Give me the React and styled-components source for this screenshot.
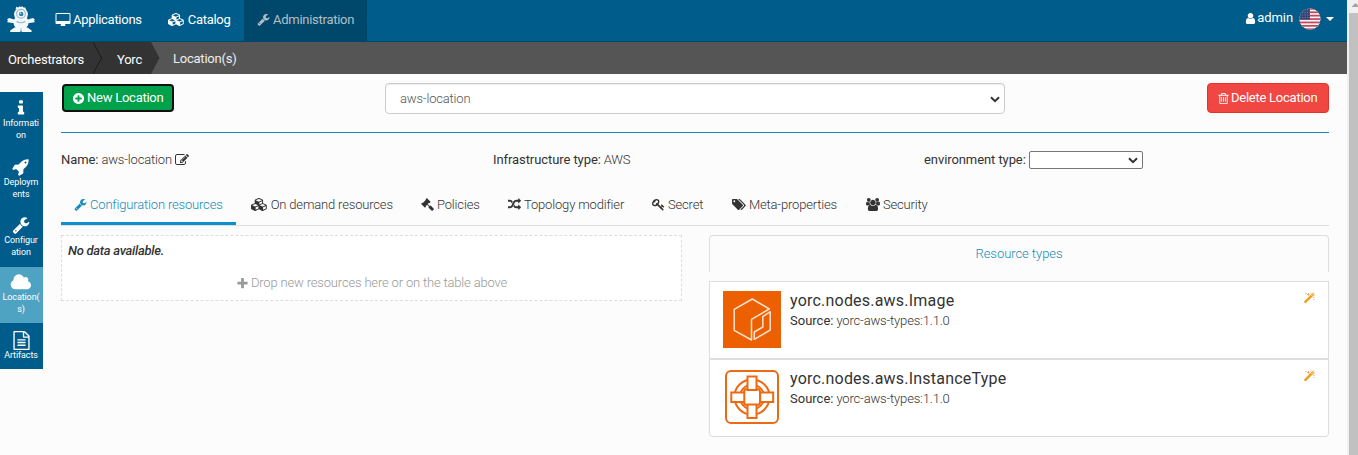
import React from 'react';
import styled, { createGlobalStyle, css } from 'styled-components';

const Global = createGlobalStyle`
  * { box-sizing: border-box; }
  body {
    margin: 0;
    background: #fcfcfc;
    color: #333;
    font: 300 13px/18px Roboto, "Liberation Sans", sans-serif;
    letter-spacing: -0.17px;
    overflow: hidden;
  }
`;

const ICONS = {
  desktop: [1920, 'M1728 992v-832q0-13-9.5-22.5t-22.5-9.5h-1600q-13 0-22.5 9.5t-9.5 22.5v832q0 13 9.5 22.5t22.5 9.5h1600q13 0 22.5-9.5t9.5-22.5zm128-832v1088q0 66-47 113t-113 47h-544q0 37 16 77.5t32 71 16 43.5q0 26-19 45t-45 19h-512q-26 0-45-19t-19-45q0-14 16-44t32-70 16-78h-544q-66 0-113-47t-47-113v-1088q0-66 47-113t113-47h1600q66 0 113 47t47 113z'],
  cubes: [2304, 'M640 1632l384-192v-314l-384 164v342zm-64-454l404-173-404-173-404 173zm1088 454l384-192v-314l-384 164v342zm-64-454l404-173-404-173-404 173zm-448-293l384-165v-266l-384 164v267zm-64-379l441-189-441-189-441 189zm1088 518v416q0 36-19 67t-52 47l-448 224q-25 14-57 14t-57-14l-448-224q-4-2-7-4-2 2-7 4l-448 224q-25 14-57 14t-57-14l-448-224q-33-16-52-47t-19-67v-416q0-38 21.5-70t56.5-48l434-186v-400q0-38 21.5-70t56.5-48l448-192q23-10 50-10t50 10l448 192q35 16 56.5 48t21.5 70v400l434 186q36 16 57 48t21 70z'],
  wrench: [1792, 'M448 1472q0-26-19-45t-45-19-45 19-19 45 19 45 45 19 45-19 19-45zm644-420l-682 682q-37 37-90 37-52 0-91-37l-106-108q-38-36-38-90 0-53 38-91l681-681q39 98 114.5 173.5t173.5 114.5zm634-435q0 39-23 106-47 134-164.5 217.5t-258.5 83.5q-185 0-316.5-131.5t-131.5-316.5 131.5-316.5 316.5-131.5q58 0 121.5 16.5t107.5 46.5q16 11 16 28t-16 28l-293 169v224l193 107q5-3 79-48.5t135.5-81 70.5-35.5q15 0 23.5 10t8.5 25z'],
  user: [1792, 'M1536 1399q0 109-62.5 187t-150.5 78h-854q-88 0-150.5-78t-62.5-187q0-85 8.5-160.5t31.5-152 58.5-131 94-89 134.5-34.5q131 128 313 128t313-128q76 0 134.5 34.5t94 89 58.5 131 31.5 152 8.5 160.5zm-256-887q0 159-112.5 271.5t-271.5 112.5-271.5-112.5-112.5-271.5 112.5-271.5 271.5-112.5 271.5 112.5 112.5 271.5z'],
  trash: [1792, 'M704 736v576q0 14-9 23t-23 9h-64q-14 0-23-9t-9-23v-576q0-14 9-23t23-9h64q14 0 23 9t9 23zm256 0v576q0 14-9 23t-23 9h-64q-14 0-23-9t-9-23v-576q0-14 9-23t23-9h64q14 0 23 9t9 23zm256 0v576q0 14-9 23t-23 9h-64q-14 0-23-9t-9-23v-576q0-14 9-23t23-9h64q14 0 23 9t9 23zm128 724v-948h-896v948q0 22 7 40.5t14.5 27 10.5 8.5h832q3 0 10.5-8.5t14.5-27 7-40.5zm-672-1076h448l-48-117q-7-9-17-11h-317q-10 2-17 11zm928 32v64q0 14-9 23t-23 9h-96v948q0 83-47 143.5t-113 60.5h-832q-66 0-113-58.5t-47-141.5v-952h-96q-14 0-23-9t-9-23v-64q0-14 9-23t23-9h309l70-167q15-37 54-63t79-26h320q40 0 79 26t54 63l70 167h309q14 0 23 9t9 23z'],
  plusCircle: [1792, 'M1344 960v-128q0-26-19-45t-45-19h-256v-256q0-26-19-45t-45-19h-128q-26 0-45 19t-19 45v256h-256q-26 0-45 19t-19 45v128q0 26 19 45t45 19h256v256q0 26 19 45t45 19h128q26 0 45-19t19-45v-256h256q26 0 45-19t19-45zm320-64q0 209-103 385.5t-279.5 279.5-385.5 103-385.5-103-279.5-279.5-103-385.5 103-385.5 279.5-279.5 385.5-103 385.5 103 279.5 279.5 103 385.5z'],
  info: [1792, 'M1216 1344v128q0 26-19 45t-45 19h-512q-26 0-45-19t-19-45v-128q0-26 19-45t45-19h64v-384h-64q-26 0-45-19t-19-45v-128q0-26 19-45t45-19h384q26 0 45 19t19 45v576h64q26 0 45 19t19 45zm-128-1152v192q0 26-19 45t-45 19h-256q-26 0-45-19t-19-45v-192q0-26 19-45t45-19h256q26 0 45 19t19 45z'],
  rocket: [1792, 'M1440 448q0-40-28-68t-68-28-68 28-28 68 28 68 68 28 68-28 28-68zm224-288q0 249-75.5 430.5t-253.5 360.5q-81 80-195 176l-20 379q-2 16-16 26l-384 224q-7 4-16 4-12 0-23-9l-64-64q-13-14-8-32l85-276-281-281-276 85q-3 1-9 1-14 0-23-9l-64-64q-17-19-5-39l224-384q10-14 26-16l379-20q96-114 176-195 188-187 358-258t431-71q14 0 24 9.5t10 22.5z'],
  cloud: [2048, 'M1984 1152q0 159-112.5 271.5t-271.5 112.5h-1088q-185 0-316.5-131.5t-131.5-316.5q0-132 71-241.5t187-163.5q-2-28-2-43 0-212 150-362t362-150q158 0 286.5 88t187.5 230q70-62 166-62 106 0 181 75t75 181q0 75-41 138 129 30 213 134.5t84 239.5z'],
  file: [1792, 'M1596 380q28 28 48 76t20 88v1152q0 40-28 68t-68 28h-1344q-40 0-68-28t-28-68v-1600q0-40 28-68t68-28h896q40 0 88 20t76 48zm-444-244v376h376q-10-29-22-41l-313-313q-12-12-41-22zm384 1528v-1024h-416q-40 0-68-28t-28-68v-416h-768v1536h1280zm-1024-864q0-14 9-23t23-9h704q14 0 23 9t9 23v64q0 14-9 23t-23 9h-704q-14 0-23-9t-9-23v-64zm736 224q14 0 23 9t9 23v64q0 14-9 23t-23 9h-704q-14 0-23-9t-9-23v-64q0-14 9-23t23-9h704zm0 256q14 0 23 9t9 23v64q0 14-9 23t-23 9h-704q-14 0-23-9t-9-23v-64q0-14 9-23t23-9h704z'],
  edit: [1792, 'M888 1184l116-116-152-152-116 116v56h96v96h56zm440-720q-16-16-33 1l-350 350q-17 17-1 33t33-1l350-350q17-17 1-33zm80 594v190q0 119-84.5 203.5t-203.5 84.5h-832q-119 0-203.5-84.5t-84.5-203.5v-832q0-119 84.5-203.5t203.5-84.5h832q63 0 117 25 15 7 18 23 3 17-9 29l-49 49q-14 14-32 8-23-6-45-6h-832q-66 0-113 47t-47 113v832q0 66 47 113t113 47h832q66 0 113-47t47-113v-126q0-13 9-22l64-64q15-15 35-7t20 29zm-96-738l288 288-672 672h-288v-288zm444 132l-92 92-288-288 92-92q28-28 68-28t68 28l152 152q28 28 28 68t-28 68z'],
  gavel: [1792, 'M1771 1536q0 53-37 90l-107 108q-39 37-91 37-53 0-90-37l-363-364q-38-36-38-90 0-53 43-96l-256-256-126 126q-14 14-34 14t-34-14q2 2 12.5 12t12.5 13 10 11.5 10 13.5 6 13.5 5.5 16.5 1.5 18q0 38-28 68-3 3-16.5 18t-19 20.5-18.5 16.5-22 15.5-22 9-26 4.5q-40 0-68-28l-408-408q-28-28-28-68 0-13 4.5-26t9-22 15.5-22 16.5-18.5 20.5-19 18-16.5q30-28 68-28 10 0 18 1.5t16.5 5.5 13.5 6 13.5 10 11.5 10 13 12.5 12 12.5q-14-14-14-34t14-34l348-348q14-14 34-14t34 14q-2-2-12.5-12t-12.5-13-10-11.5-10-13.5-6-13.5-5.5-16.5-1.5-18q0-38 28-68 3-3 16.5-18t19-20.5 18.5-16.5 22-15.5 22-9 26-4.5q40 0 68 28l408 408q28 28 28 68 0 13-4.5 26t-9 22-15.5 22-16.5 18.5-20.5 19-18 16.5q-30 28-68 28-10 0-18-1.5t-16.5-5.5-13.5-6-13.5-10-11.5-10-13-12.5-12-12.5q14 14 14 34t-14 34l-126 126 256 256q43-43 96-43 52 0 91 37l363 363q37 39 37 91z'],
  random: [1792, 'M666 481q-60 92-137 273-22-45-37-72.5t-40.5-63.5-51-56.5-63-35-81.5-14.5h-224q-14 0-23-9t-9-23v-192q0-14 9-23t23-9h224q250 0 410 225zm1126 799q0 14-9 23l-320 320q-9 9-23 9-13 0-22.5-9.5t-9.5-22.5v-192q-32 0-85 .5t-81 1-73-1-71-5-64-10.5-63-18.5-58-28.5-59-40-55-53.5-56-69.5q59-93 136-273 22 45 37 72.5t40.5 63.5 51 56.5 63 35 81.5 14.5h256v-192q0-14 9-23t23-9q12 0 24 10l319 319q9 9 9 23zm0-896q0 14-9 23l-320 320q-9 9-23 9-13 0-22.5-9.5t-9.5-22.5v-192h-256q-48 0-87 15t-69 45-51 61.5-45 77.5q-32 62-78 171-29 66-49.5 111t-54 105-64 100-74 83-90 68.5-106.5 42-128 16.5h-224q-14 0-23-9t-9-23v-192q0-14 9-23t23-9h224q48 0 87-15t69-45 51-61.5 45-77.5q32-62 78-171 29-66 49.5-111t54-105 64-100 74-83 90-68.5 106.5-42 128-16.5h256v-192q0-14 9-23t23-9q12 0 24 10l319 319q9 9 9 23z'],
  key: [1792, 'M832 512q0-80-56-136t-136-56-136 56-56 136q0 42 19 83-41-19-83-19-80 0-136 56t-56 136 56 136 136 56 136-56 56-136q0-42-19-83 41 19 83 19 80 0 136-56t56-136zm851 704q0 17-49 66t-66 49q-9 0-28.5-16t-36.5-33-38.5-40-24.5-26l-96 96 220 220q28 28 28 68 0 42-39 81t-81 39q-40 0-68-28l-671-671q-176 131-365 131-163 0-265.5-102.5t-102.5-265.5q0-160 95-313t248-248 313-95q163 0 265.5 102.5t102.5 265.5q0 189-131 365l355 355 96-96q-3-3-26-24.5t-40-38.5-33-36.5-16-28.5q0-17 49-66t66-49q13 0 23 10 6 6 46 44.5t82 79.5 86.5 86 73 78 28.5 41z'],
  tags: [1920, 'M448 448q0-53-37.5-90.5t-90.5-37.5-90.5 37.5-37.5 90.5 37.5 90.5 90.5 37.5 90.5-37.5 37.5-90.5zm1067 576q0 53-37 90l-491 492q-39 37-91 37-53 0-90-37l-715-716q-38-37-64.5-101t-26.5-117v-416q0-52 38-90t90-38h416q53 0 117 26.5t102 64.5l715 714q37 39 37 91zm384 0q0 53-37 90l-491 492q-39 37-91 37-36 0-59-14t-53-45l470-470q37-37 37-90 0-52-37-91l-715-714q-38-38-102-64.5t-117-26.5h224q53 0 117 26.5t102 64.5l715 714q37 39 37 91z'],
  users: [1920, 'M593 896q-162 5-265 128h-134q-82 0-138-40.5t-56-118.5q0-353 124-353 6 0 43.5 21t97.5 42.5 119 21.5q67 0 133-23-5 37-5 66 0 159 93 293zm1071 637q0 120-73 189.5t-194 69.5h-874q-121 0-194-69.5t-73-189.5q0-53 3.5-103.5t14-109 26.5-108.5 43-97.5 62-81 85.5-53.5 111.5-20q10 0 43 21.5t73 48 107 48 135 21.5 135-21.5 107-48 73-48 43-21.5q61 0 111.5 20t85.5 53.5 62 81 43 97.5 26.5 108.5 14 109 3.5 103.5zm-1024-1277q0 106-75 181t-181 75-181-75-75-181 75-181 181-75 181 75 75 181zm704 384q0 159-112.5 271.5t-271.5 112.5-271.5-112.5-112.5-271.5 112.5-271.5 271.5-112.5 271.5 112.5 112.5 271.5zm576 225q0 78-56 118.5t-138 40.5h-134q-103-123-265-128 93-134 93-293 0-29-5-66 66 23 133 23 59 0 119-21.5t97.5-42.5 43.5-21q124 0 124 353zm-128-609q0 106-75 181t-181 75-181-75-75-181 75-181 181-75 181 75 75 181z'],
  plus: [1792, 'M1600 736v192q0 40-28 68t-68 28h-416v416q0 40-28 68t-68 28h-192q-40 0-68-28t-28-68v-416h-416q-40 0-68-28t-28-68v-192q0-40 28-68t68-28h416v-416q0-40 28-68t68-28h192q40 0 68 28t28 68v416h416q40 0 68 28t28 68z'],
};

const Glyph = styled.svg`
  display: block;
  flex: none;
  fill: currentColor;
  overflow: visible;
`;

function Icon({ name, size = 13 }) {
  const [w, d] = ICONS[name];
  return (
    <Glyph viewBox={`0 0 ${w} 1792`} width={(size * w) / 1792} height={size}>
      <path d={d} />
    </Glyph>
  );
}

const Screen = styled.div`
  display: flex;
  width: 1358px;
  height: 455px;
`;
const Page = styled.div`
  width: 1347px;
  display: flex;
  flex-direction: column;
`;
const Scrollbar = styled.div`
  width: 11px;
  padding-left: 2px;
  background: #f1f1f1;
  overflow: hidden;
  svg { display: block; }
`;
const Thumb = styled.div`
  height: 442px;
  background: #c1c1c1;
`;

const Navbar = styled.nav`
  display: flex;
  height: 42px;
  background: #005c8a;
  border-bottom: 1px solid #00456a;
  color: #fff;
  font-weight: 400;
  letter-spacing: -0.27px;
`;
const Brand = styled.div`
  width: 44px;
  padding: 5px 0 0 6px;
`;
const NavItem = styled.a`
  display: flex;
  align-items: center;
  gap: ${p => p.$gap ?? 3}px;
  width: ${p => p.$width}px;
  padding-left: ${p => p.$pad ?? 12}px;
  padding-bottom: 2px;
  ${p => p.$active && css`background: #00486b; color: #b3bfc7;`}
`;
const UserMenu = styled.div`
  display: flex;
  align-items: center;
  margin-left: auto;
  padding: 0 13px 5px 0;
  letter-spacing: -0.1px;
`;
const Flag = styled.svg`
  display: block;
  margin: 2px 0 0 6px;
`;
const Caret = styled.span`
  margin: 2px 0 0 5px;
  border: 4px solid transparent;
  border-top-color: #fff;
  border-bottom: 0;
`;

const Breadcrumb = styled.div`
  display: flex;
  height: 32px;
  background: #555;
  color: #fff;
  font-weight: 400;
  letter-spacing: -0.23px;
`;
const Crumb = styled.div`
  width: ${p => p.$width}px;
  padding: 9px 0 0 ${p => p.$pad}px;
  background: #333;
`;
const CrumbArrow = styled.svg`
  display: block;
  background: ${p => p.$bg};
`;
const CrumbCurrent = styled.div`
  padding: 8px 0 0 13px;
  color: #eee;
`;

const Body = styled.div`
  display: flex;
`;
const Sidebar = styled.aside`
  width: 43px;
  height: 277px;
  margin-top: 18px;
  background: #005c8a;
  color: #fff;
  font-size: 9px;
  font-weight: 400;
  line-height: 12px;
  letter-spacing: -0.1px;
`;
const SideItem = styled.a`
  display: flex;
  flex-direction: column;
  align-items: center;
  height: ${p => p.$height}px;
  padding: ${p => p.$pad}px 1px 0 0;
  text-align: center;
  background: ${p => (p.$active ? '#4fa3c2' : 'transparent')};
`;
const SideIcon = styled.span`
  display: flex;
  align-items: center;
  height: 18px;
`;

const Main = styled.main`
  width: 1268px;
  margin-left: 18px;
`;
const TopBar = styled.div`
  display: flex;
  height: 59px;
  padding-top: 9px;
  border-bottom: 1px solid #158cba;
`;
const NewButton = styled.button`
  display: flex;
  align-items: center;
  gap: 2px;
  width: 112px;
  height: 28px;
  margin: 1px 0 0 1px;
  padding: 0 0 0 8px;
  border: 2px solid #101010;
  border-radius: 4px;
  background: #00a14b;
  color: #fff;
  font: inherit;
  font-weight: 400;
  letter-spacing: -0.25px;
  white-space: nowrap;
`;
const DeleteButton = styled(NewButton)`
  gap: 1px;
  width: 122px;
  height: 30px;
  margin: 0 0 0 auto;
  padding-left: 9px;
  border: 1px solid #e8302c;
  background: #f04743;
`;
const LocationSelect = styled.div`
  display: flex;
  align-items: center;
  justify-content: space-between;
  width: 620px;
  height: 31px;
  margin-left: 211px;
  padding: 1px 4px 0 14px;
  border: 1px solid #ccc;
  border-radius: 4px;
  background: #fff;
  box-shadow: inset 0 1px 1px rgba(0, 0, 0, 0.075);
  color: #555;
`;
const Facts = styled.div`
  display: grid;
  grid-template-columns: 432px 431px 1fr;
  height: 50px;
  padding-top: 18px;
`;
const Fact = styled.div`
  display: flex;
  align-items: center;
  height: 18px;
  gap: ${p => p.$gap ?? 3}px;
  b { font-weight: 400; letter-spacing: -0.08px; }
`;
const EnvSelect = styled.span`
  display: flex;
  align-items: center;
  justify-content: flex-end;
  width: 114px;
  height: 18px;
  padding-right: 4px;
  border: 1px solid #767676;
  border-radius: 2px;
  background: #fff;
`;
const Tabs = styled.div`
  display: flex;
  height: 43px;
  border-bottom: 1px solid #ddd;
`;
const Tab = styled.a`
  display: flex;
  align-items: center;
  gap: 3px;
  width: ${p => p.$width}px;
  padding: 1px 0 0 15px;
  ${p => p.$active && css`
    padding: 4px 0 0 13px;
    color: #158cba;
    border-bottom: 3px solid #0e8fd0;
  `}
`;
const Columns = styled.div`
  display: flex;
  justify-content: space-between;
  align-items: flex-start;
  padding-top: 9px;
`;
const DropZone = styled.div`
  width: 621px;
  height: 66px;
  padding: 6px 6px 0;
  border: 1px dashed #ddd;
  background: #fff;
`;
const Empty = styled.div`
  font-weight: 500;
  font-style: italic;
  letter-spacing: -0.27px;
`;
const DropHint = styled.div`
  display: flex;
  align-items: center;
  justify-content: center;
  gap: 2px;
  margin-top: 14px;
  color: #999;
`;
const Catalog = styled.section`
  width: 620px;
`;
const CatalogTitle = styled.div`
  height: 37px;
  padding-top: 9px;
  border: 1px solid #ddd;
  border-bottom: 0;
  border-radius: 4px 4px 0 0;
  text-align: center;
  color: #158cba;
  letter-spacing: -0.05px;
`;
const CardList = styled.div`
  margin-top: 9px;
`;
const Card = styled.article`
  display: flex;
  height: 78px;
  padding: 9px 13px 0 13px;
  border: 1px solid #ddd;
  background: #fff;
  &:last-child { border-radius: 0 0 4px 4px; }
`;
const CardText = styled.div`
  flex: 1;
  margin-left: 9px;
  b { font-weight: 400; letter-spacing: 0; }
`;
const CardTitle = styled.h4`
  margin: 0 0 1px;
  font-size: 16px;
  font-weight: 400;
  line-height: 20px;
  letter-spacing: 0.21px;
`;
const Wand = styled.svg`
  display: block;
  margin-top: 1px;
`;

const Logo = () => (
  <svg width="30" height="28" viewBox="0 0 30 28">
    <g fill="#f4f8fa">
      <path d="M9.5 4L10.5 1.8 12.5 2.4 13.6 1.2 15 2 16.6 1.2 17.3 2.5 19.4 2.6 20 5z" />
      <circle cx="15" cy="9.3" r="6.9" />
      <ellipse cx="15" cy="17.5" rx="7.6" ry="7.5" />
      <path d="M8 14.5L3.2 13 1.2 14.2 2 16 .8 17 3 17.6 8.5 18.2zM22 14.5L26.8 13 28.8 14.2 28 16 29.2 17 27 17.6 21.5 18.2z" />
      <path d="M8.5 22.5L4.2 25.4V27H14.2L15 25 15.8 27H25.6V25.4L21.5 22.5z" />
    </g>
    <circle cx="15" cy="8.8" r="4.4" fill="none" stroke="#8fbbd1" strokeWidth="1.1" />
    <circle cx="15.2" cy="9" r="2.2" fill="#2f7ea8" />
    <circle cx="14.6" cy="8.3" r=".8" fill="#cfe3ec" />
    <path d="M10.5 16.6q4.5 2.4 9 0" fill="none" stroke="#8fb9ce" strokeWidth="1.1" />
    <path d="M15 23v3" stroke="#8fb9ce" strokeWidth=".8" />
  </svg>
);

const UsFlag = () => (
  <Flag width="22" height="22" viewBox="0 0 22 22">
    <defs>
      <clipPath id="disc"><circle cx="11" cy="11" r="10.6" /></clipPath>
    </defs>
    <g clipPath="url(#disc)">
      <rect width="22" height="22" fill="#f4f4f4" />
      {[0, 3.4, 6.8, 10.2, 13.6, 17, 20.4].map(y => (
        <rect key={y} y={y} width="22" height="1.7" fill="#c5455a" />
      ))}
      <rect width="11" height="11.5" fill="#34467a" />
      {[2, 4.5, 7, 9.5].map(y => (
        <path key={y} d={`M1 ${y}h10`} stroke="#7d8ab0" strokeWidth=".8" strokeDasharray="1 1.3" />
      ))}
    </g>
  </Flag>
);

const Chevron = () => (
  <svg width="10" height="7" viewBox="0 0 10 7">
    <path d="M1 1.2l4 4 4-4" fill="none" stroke="#333" strokeWidth="2" />
  </svg>
);

const MagicWand = () => (
  <Wand width="11" height="12" viewBox="0 0 11 12">
    <path d="M1.4 9.8L7.4 3.9" stroke="#eba21c" strokeWidth="2.5" strokeLinecap="round" />
    <path d="M7 4.2l2.4-2.4" stroke="#eba21c" strokeWidth="2.3" />
    <path d="M7.4 3.8l1.3-1.3" stroke="#fff3d8" strokeWidth="1" />
    <path d="M1.4 1.5h1M3 2.5h2.4M4 1.5h1M4.4 3.5h1M6.4 1h1M9.2 5.4h1.2M9.4 7.5h1M9.6 3.4h1M9.4 1h1" stroke="#e3a47a" strokeWidth="1" />
  </Wand>
);

const ImageLogo = () => (
  <svg width="58" height="57" viewBox="0 0 58 57">
    <rect width="58" height="57" fill="#ed6002" />
    <g fill="none" stroke="#fde3cf" strokeWidth="1.5" strokeLinejoin="round">
      <path d="M46.3 18L29.3 8 11.2 18.3V39.3L28.5 49V28.3L46.3 18Z" />
      <path d="M47.2 20.7V39L31.3 48.3V41L39.8 36V25.7Z" />
    </g>
  </svg>
);

const InstanceLogo = () => (
  <svg width="58" height="57" viewBox="0 0 58 57">
    <g fill="none" stroke="#ed6a12" strokeWidth="2">
      <rect x="3" y="2" width="52" height="52" rx="5" />
      <circle cx="29" cy="28" r="17.6" />
      <circle cx="29" cy="28" r="12.2" />
    </g>
    <rect x="21" y="20" width="16" height="16" rx="3" fill="#fff" stroke="#ed6a12" strokeWidth="2" />
    <g fill="#fff" stroke="#ed6a12" strokeWidth="2">
      <rect x="24.5" y="7.5" width="9" height="13.5" />
      <rect x="24.5" y="35.5" width="9" height="13.5" />
      <rect x="8.3" y="23.5" width="13" height="9.5" />
      <rect x="37.2" y="23.5" width="13" height="9.5" />
    </g>
  </svg>
);

const SIDE = [
  { icon: 'info', size: 18, lines: ['Informati', 'on'], height: 58, pad: 7 },
  { icon: 'rocket', size: 18, lines: ['Deploym', 'ents'], height: 59, pad: 8 },
  { icon: 'wrench', size: 18, lines: ['Configur', 'ation'], height: 58, pad: 7 },
  { icon: 'cloud', size: 19, lines: ['Location(', 's)'], height: 56, pad: 6, active: true },
  { icon: 'file', size: 19, lines: ['Artifacts'], height: 46, pad: 8 },
];

const TABS = [
  ['wrench', 'Configuration resources', 175, true],
  ['cubes', 'On demand resources', 170],
  ['gavel', 'Policies', 87],
  ['random', 'Topology modifier', 144],
  ['key', 'Secret', 80],
  ['tags', 'Meta-properties', 134],
  ['users', 'Security', 90],
];

const CARDS = [
  ['yorc.nodes.aws.Image', ImageLogo],
  ['yorc.nodes.aws.InstanceType', InstanceLogo],
];

export default function App() {
  return (
    <Screen>
      <Global />
      <Page>
        <Navbar>
          <Brand><Logo /></Brand>
          <NavItem $width={112} $gap={2}><Icon name="desktop" size={14} />Applications</NavItem>
          <NavItem $width={88}><Icon name="cubes" />Catalog</NavItem>
          <NavItem $width={123} $pad={13} $active><Icon name="wrench" />Administration</NavItem>
          <UserMenu><Icon name="user" />admin<UsFlag /><Caret /></UserMenu>
        </Navbar>
        <Breadcrumb>
          <Crumb $width={93} $pad={8}>Orchestrators</Crumb>
          <CrumbArrow $bg="#333" width="9" height="32" viewBox="0 0 9 32">
            <path d="M0 0l8.5 16L0 32" fill="none" stroke="#1c1c1c" />
          </CrumbArrow>
          <Crumb $width={49} $pad={15}>Yorc</Crumb>
          <CrumbArrow $bg="#555" width="9" height="32" viewBox="0 0 9 32">
            <path d="M0 0l8.5 16L0 32z" fill="#333" />
          </CrumbArrow>
          <CrumbCurrent>Location(s)</CrumbCurrent>
        </Breadcrumb>
        <Body>
          <Sidebar>
            {SIDE.map(s => (
              <SideItem key={s.icon} $height={s.height} $pad={s.pad} $active={s.active}>
                <SideIcon><Icon name={s.icon} size={s.size} /></SideIcon>
                {s.lines.map(l => <span key={l}>{l}</span>)}
              </SideItem>
            ))}
          </Sidebar>
          <Main>
            <TopBar>
              <NewButton><Icon name="plusCircle" />New Location</NewButton>
              <LocationSelect>aws-location<Chevron /></LocationSelect>
              <DeleteButton><Icon name="trash" />Delete Location</DeleteButton>
            </TopBar>
            <Facts>
              <Fact><b>Name:</b><span>aws-location</span><Icon name="edit" size={14} /></Fact>
              <Fact><b>Infrastructure type:</b><span>AWS</span></Fact>
              <Fact><b>environment type:</b><EnvSelect><Chevron /></EnvSelect></Fact>
            </Facts>
            <Tabs>
              {TABS.map(([icon, label, width, active]) => (
                <Tab key={icon} $width={width} $active={active}><Icon name={icon} />{label}</Tab>
              ))}
            </Tabs>
            <Columns>
              <DropZone>
                <Empty>No data available.</Empty>
                <DropHint><Icon name="plus" />Drop new resources here or on the table above</DropHint>
              </DropZone>
              <Catalog>
                <CatalogTitle>Resource types</CatalogTitle>
                <CardList>
                  {CARDS.map(([name, Picture]) => (
                    <Card key={name}>
                      <Picture />
                      <CardText>
                        <CardTitle>{name}</CardTitle>
                        <b>Source:</b> yorc-aws-types:1.1.0
                      </CardText>
                      <MagicWand />
                    </Card>
                  ))}
                </CardList>
              </Catalog>
            </Columns>
          </Main>
        </Body>
      </Page>
      <Scrollbar>
        <svg width="11" height="13" viewBox="0 0 11 13"><path d="M2.5 7L6.5 3l4 4z" fill="#a3a3a3" /></svg>
        <Thumb />
      </Scrollbar>
    </Screen>
  );
}
